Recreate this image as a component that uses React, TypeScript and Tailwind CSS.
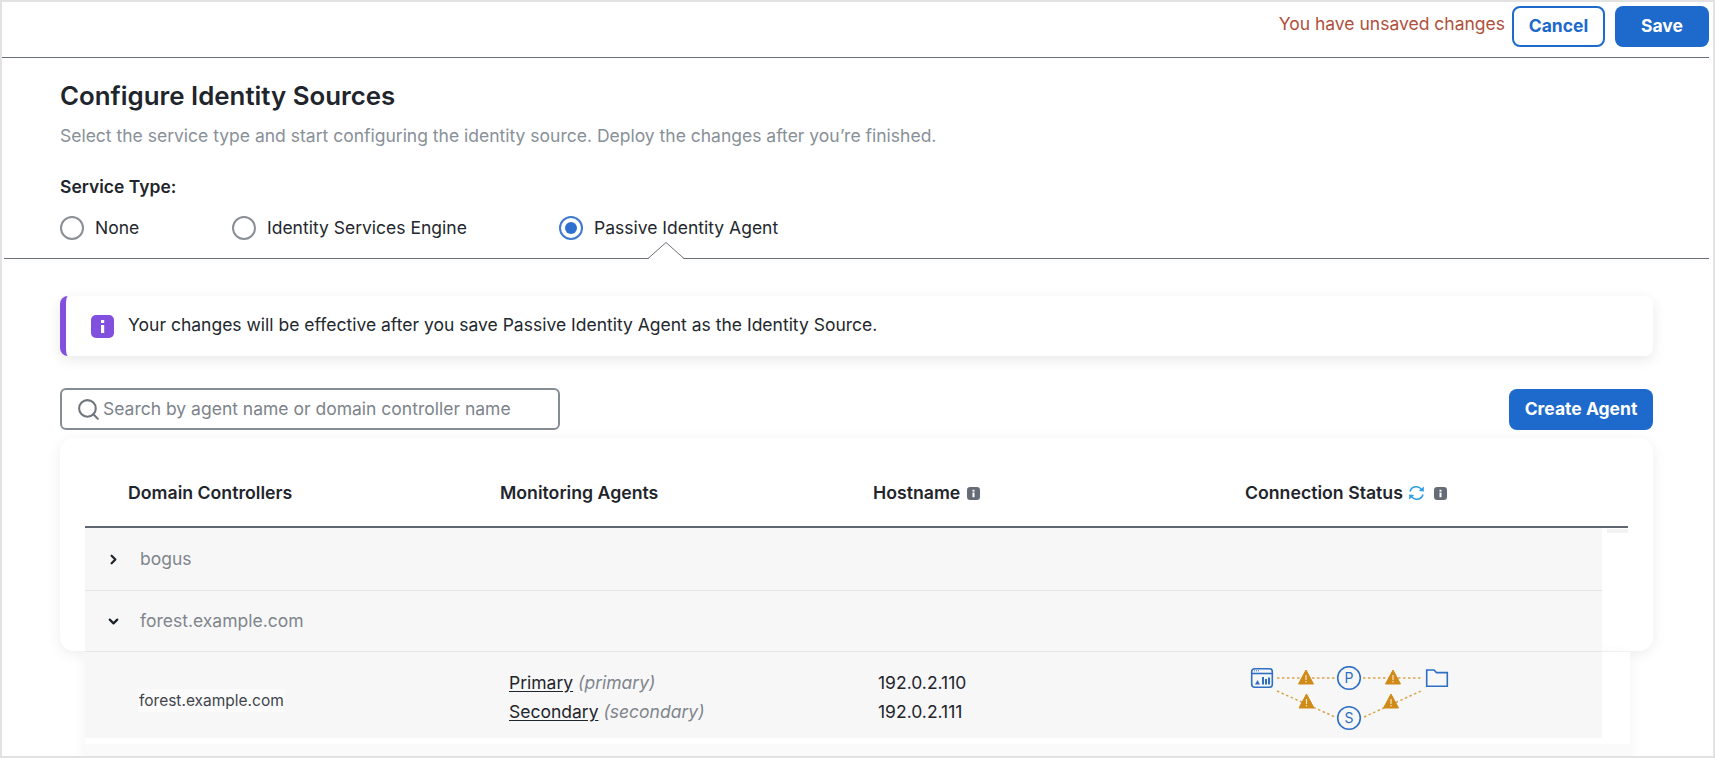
import { ChevronDown, ChevronRight, Search } from "lucide-react";

const InfoBadge = ({ className }: { className: string }) => (
	<svg viewBox="0 0 14 14" className={className}>
		<rect width="14" height="14" rx="3.5" fill="currentColor" />
		<rect x="5.9" y="6" width="2.2" height="5" fill="#fff" />
		<rect x="5.9" y="3" width="2.2" height="2" fill="#fff" />
	</svg>
);

const RefreshArrows = () => (
	<svg width="17" height="16" viewBox="0 0 17 16" fill="none" className="ml-[5px] -translate-y-[1px]">
		<path d="M2 6.5 C3 3 6 1.6 9 1.8 C11 2 12.4 3 13.4 4.4" stroke="#2a9ee6" strokeWidth="1.6" />
		<path d="M15.8 1.6 L15.8 6.6 L10.8 6" fill="#2a9ee6" />
		<path d="M15 9.5 C14 13 11 14.4 8 14.2 C6 14 4.6 13 3.6 11.6" stroke="#2a9ee6" strokeWidth="1.6" />
		<path d="M1.2 14.4 L1.2 9.4 L6.2 10" fill="#2a9ee6" />
	</svg>
);

const Radio = ({ label, checked, className }: { label: string; checked?: boolean; className: string }) => (
	<div className={`flex items-center ${className}`}>
		{checked ? (
			<span className="flex h-[24px] w-[24px] items-center justify-center rounded-full border-2 border-[#3f79d0]">
				<span className="h-[12px] w-[12px] rounded-full bg-[#2e6fd0]" />
			</span>
		) : (
			<span className="h-[24px] w-[24px] rounded-full border-2 border-[#8a8f96]" />
		)}
		<span className="ml-[11px] text-[17.5px] text-[#23282e]">{label}</span>
	</div>
);

const Warn = ({ x, y }: { x: number; y: number }) => (
	<g transform={`translate(${x} ${y})`}>
		<path d="M0 -8 L7.5 6 L-7.5 6 Z" fill="#d08a17" stroke="#d08a17" strokeWidth="1" strokeLinejoin="round" />
		<rect x="-0.6" y="-3" width="1.2" height="5" fill="#fbe7c4" />
		<rect x="-0.6" y="3" width="1.2" height="1.3" fill="#fbe7c4" />
	</g>
);

// Primary / secondary connection diagram
const Topology = () => (
	<svg width="200" height="66" viewBox="0 0 200 66" fill="none" className="block">
		<g stroke="#d9a24a" strokeWidth="1.5" strokeDasharray="2.5 2.5">
			<path d="M27 12 H85" />
			<path d="M113 12 H171" />
			<path d="M27 25 L85 51" />
			<path d="M114 51 L171 25" />
		</g>
		<g stroke="#2e6fc4" strokeWidth="1.6">
			<rect x="1.7" y="2.7" width="20.6" height="18.6" rx="3" />
			<path d="M2 7.5 H22" />
			<circle cx="99" cy="12" r="11.3" fill="#f7f7f8" />
			<circle cx="99" cy="52" r="11.3" fill="#f7f7f8" />
			<path d="M176.7 20.3 V4 H184 L186.5 6.6 H197.3 V20.3 Z" />
		</g>
		<g fill="#2e6fc4">
			<rect x="4" y="4.3" width="1" height="1" />
			<rect x="6" y="4.3" width="1" height="1" />
			<rect x="8" y="4.3" width="1" height="1" />
			<path d="M5 18.5 L7.5 14 L10 18.5 Z" />
			<rect x="12" y="11" width="2" height="7.5" />
			<rect x="15" y="13" width="2" height="5.5" />
			<rect x="18" y="11.5" width="2" height="7" />
		</g>
		<text x="99" y="17" textAnchor="middle" fontSize="14" fill="#2e6fc4">P</text>
		<text x="99" y="57" textAnchor="middle" fontSize="14" fill="#2e6fc4">S</text>
		<Warn x={56} y={12} />
		<Warn x={143} y={12} />
		<Warn x={56.5} y={36} />
		<Warn x={141} y={36} />
	</svg>
);

export default function App() {
	return (
		<div className="h-[758px] w-[1715px] overflow-hidden border-2 border-[#e2e2e2] bg-white font-['Inter',sans-serif] text-[#1f252c]">
			<div className="flex h-[55px] items-start justify-end pt-[4px] pr-[4px]">
				<span className="mt-[5px] mr-[7px] text-[17.5px] text-[#b0503c]">You have unsaved changes</span>
				<button className="h-[41px] w-[93px] rounded-[8px] border-2 border-[#1d69cc] bg-white text-[17.5px] font-bold text-[#1d69cc]">
					Cancel
				</button>
				<button className="ml-[10px] h-[41px] w-[94px] rounded-[8px] bg-[#1d69cc] text-[17.5px] font-bold text-white">
					Save
				</button>
			</div>
			<div className="mr-[4px] h-px bg-[#6b7078]" />

			<div className="pl-[58px]">
				<h1 className="mt-[22px] text-[25.85px] leading-[32px] font-semibold">Configure Identity Sources</h1>
				<p className="mt-[12px] text-[17.5px] leading-[24px] text-[#889098]">
					Select the service type and start configuring the identity source. Deploy the changes after you’re finished.
				</p>
				<div className="mt-[27px] text-[17.5px] leading-[24px] font-semibold">Service Type:</div>
				<div className="mt-[16px] flex">
					<Radio label="None" className="w-[172px]" />
					<Radio label="Identity Services Engine" className="w-[327px]" />
					<Radio label="Passive Identity Agent" checked className="" />
				</div>
			</div>

			<div className="relative mt-[17px] mr-[4px] ml-[2px] h-px bg-[#6b7078]">
				<svg width="36" height="17" viewBox="0 0 36 17" className="absolute -top-[16px] left-[644px]">
					<path d="M0 16.5 L18 0.5 L36 16.5" fill="#fff" stroke="#6b7078" />
					<path d="M1 17 H35" stroke="#fff" strokeWidth="2" />
				</svg>
			</div>

			<div className="mr-[60px] ml-[58px]">
				<div className="mt-[37px] flex h-[60px] items-center rounded-[8px] border-l-[6px] border-[#8250df] bg-white pl-[25px] shadow-[0_4px_14px_rgba(0,0,0,0.09)]">
					<svg viewBox="0 0 23 23" className="h-[23px] w-[23px]">
						<rect width="23" height="23" rx="5" fill="#8250df" />
						<rect x="10" y="10" width="3.2" height="8" fill="#fff" />
						<rect x="10" y="5" width="3.2" height="3" fill="#fff" />
					</svg>
					<span className="ml-[14px] -translate-y-[1px] text-[17.5px] text-[#23282e]">
						Your changes will be effective after you save Passive Identity Agent as the Identity Source.
					</span>
				</div>

				<div className="mt-[32px] flex items-center justify-between">
					<div className="flex h-[42px] w-[500px] items-center rounded-[6px] border-2 border-[#868c93] pl-[14px]">
						<Search className="h-[25px] w-[25px] text-[#6f757c]" strokeWidth={2} />
						<span className="ml-[2px] text-[17.5px] text-[#7d838a]">Search by agent name or domain controller name</span>
					</div>
					<button className="h-[41px] w-[144px] rounded-[8px] bg-[#1d69cc] text-[17.5px] font-bold text-white">
						Create Agent
					</button>
				</div>

				<div className="mt-[8px] h-[213px] rounded-[14px] bg-white pl-[25px] shadow-[0_3px_14px_rgba(0,0,0,0.07)]">
					<div className="grid h-[90px] w-[1543px] grid-cols-[415px_373px_372px_1fr] items-center border-b-2 border-[#5f6670] pt-[23px] text-[17.7px] font-semibold">
						<div className="pl-[43px]">Domain Controllers</div>
						<div>Monitoring Agents</div>
						<div className="flex items-center gap-[7px]">
							Hostname
							<InfoBadge className="h-[13px] w-[13px] text-[#666c75]" />
						</div>
						<div className="flex items-center">
							Connection Status
							<RefreshArrows />
							<InfoBadge className="ml-[9px] h-[13px] w-[13px] text-[#666c75]" />
						</div>
					</div>

					<div className="flex w-[1543px]">
						<div className="w-[1517px]">
							<div className="flex h-[63px] items-center border-b border-[#e3e5e8] bg-[#f7f7f8] pl-[21px] text-[17.5px] text-[#7f858c]">
								<ChevronRight className="h-[15px] w-[15px] text-[#1f252c]" strokeWidth={3.6} />
								<span className="ml-[19px]">bogus</span>
							</div>
							<div className="flex h-[61px] items-center border-b border-[#e3e5e8] bg-[#f7f7f8] pl-[21px] text-[17.5px] text-[#7f858c]">
								<ChevronDown className="h-[15px] w-[15px] text-[#1f252c]" strokeWidth={3.6} />
								<span className="ml-[19px]">forest.example.com</span>
							</div>
						</div>
						<div className="mt-[1px] ml-[5px] h-[4px] w-[21px] bg-[#f3f3f3]" />
					</div>

					<div className="h-[110px] w-[1545px] bg-white shadow-[0_3px_14px_rgba(0,0,0,0.05)]">
						<div className="grid h-[86px] w-[1517px] grid-cols-[415px_373px_372px_1fr] items-center bg-[#f7f7f8] text-[17.5px]">
							<div className="pt-[10px] pl-[53px]">
								<span className="bg-[#fbfbfb] px-[1px] py-[2px] text-[15.5px] text-[#3f454c]">forest.example.com</span>
							</div>
							<div className="pt-[4px] pl-[9px] leading-[29px]">
								<div>
									<span className="underline underline-offset-2">Primary</span>{" "}
									<span className="text-[#7f858c] italic">(primary)</span>
								</div>
								<div>
									<span className="underline underline-offset-2">Secondary</span>{" "}
									<span className="text-[#7f858c] italic">(secondary)</span>
								</div>
							</div>
							<div className="pt-[4px] pl-[5px] leading-[29px]">
								<div>192.0.2.110</div>
								<div>192.0.2.111</div>
							</div>
							<div className="pt-[8px] pl-[5px]">
								<Topology />
							</div>
						</div>
						<div className="mt-[6px] h-[14px] bg-[#fafafa]" />
					</div>
				</div>
			</div>
		</div>
	);
}
